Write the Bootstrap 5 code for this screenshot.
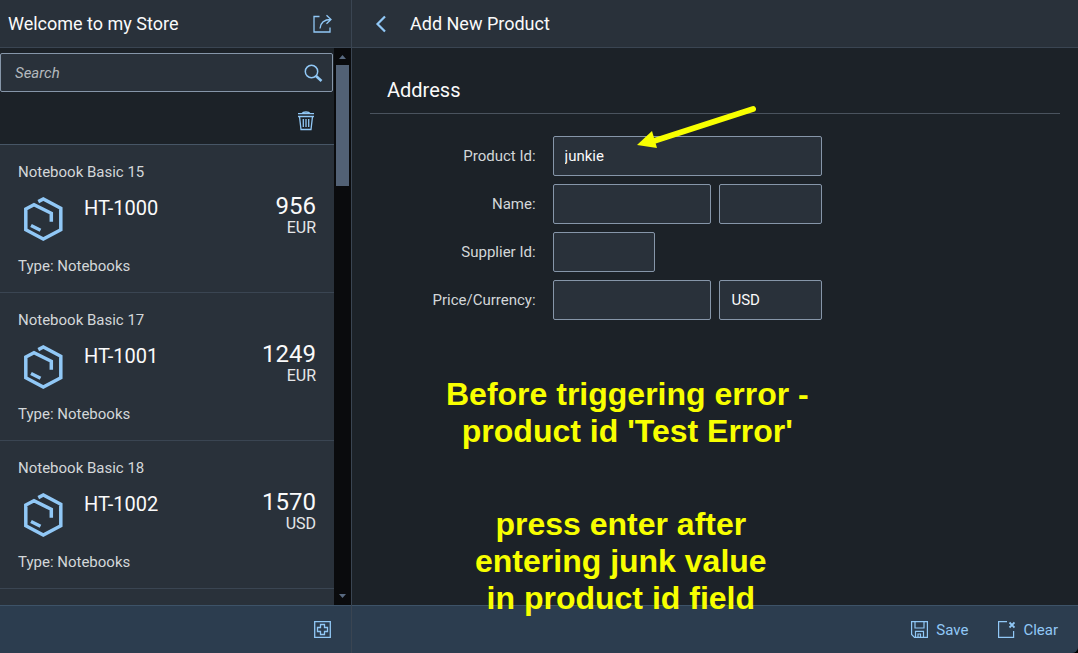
<!DOCTYPE html>
<html lang="en">
<head>
<meta charset="utf-8">
<meta name="viewport" content="width=device-width, initial-scale=1">
<title>Welcome to my Store</title>
<link href="https://cdn.jsdelivr.net/npm/bootstrap@5.3.0/dist/css/bootstrap.min.css" rel="stylesheet">
<style>
  :root { --base: #29313a; --page: #1c2228; --line: #3a4552; --accent: #91c8f6; --field: #8696a9; --label: #d3d7d9; --text: #fafafa; }
  body { font: 15px/20px Roboto, "Noto Sans", sans-serif; background: #000; color: var(--text); }
  svg { display: block; fill: none; stroke: currentColor; }
  .app { background: var(--page); border-bottom-right-radius: 6px; }
  .side { width: 352px; border-right: 1px solid var(--line); }
  .bar { height: 48px; background: var(--base); border-bottom: 1px solid var(--line); }
  .bar h1, .bar h2 { font-size: 18px; line-height: 24px; font-weight: 400; margin: 0; }
  .foot { height: 48px; background: #2c3d4f; border-top: 1px solid #3d5368; }
  .actions { gap: 30px; padding-right: 20px; }
  .act { border: 0; padding: 0; background: none; color: var(--accent); }
  .search { height: 39px; margin: 5px 1px 0 0; background: var(--base); border: 1px solid var(--field); border-radius: 2px; }
  .search input { background: none; border: 0; outline: 0; color: var(--text); padding: 0 14px; }
  .search input::placeholder { color: #b4b9be; font-style: italic; opacity: 1; }
  .tools { height: 53px; padding: 6px 19px 0 0; border-bottom: 1px solid #475666; }
  .product { padding: 17px 18px 16px; background: var(--base); border-bottom: 1px solid var(--line); color: var(--label); }
  .product-body { height: 50px; margin: 12px 0; color: var(--text); }
  .product-icon { color: var(--accent); stroke-width: 3.5; }
  .code { font-size: 20px; line-height: 28px; }
  .price { font-size: 24px; line-height: 24px; }
  .unit { font-size: 16px; line-height: 20px; color: #e4e6e8; }
  .scroller { width: 17px; background: #0a0b0d; color: #596a80; padding: 0 2px; }
  .scroller svg { fill: currentColor; stroke: none; }
  .thumb { height: 121px; background: #526175; }
  .content { padding: 28px 18px 0; }
  .content h3 { font-size: 20px; line-height: 28px; font-weight: 400; margin: 0 0 22px; padding: 0 17px 9px; border-bottom: 1px solid #4a535e; }
  .line { display: grid; grid-template-columns: 24% 39%; column-gap: 17px; margin-bottom: 8px; align-items: center; }
  .line label { text-align: right; color: var(--label); }
  .fields { display: grid; grid-template-columns: 1fr 38%; gap: 8px; }
  .fields.short { grid-template-columns: 38%; }
  .fields.full { grid-template-columns: 1fr; }
  .fields input { min-width: 0; height: 40px; padding: 0 11px; font-size: 15px; line-height: 20px; background: var(--base); border: 1px solid var(--field); border-radius: 2px; color: var(--text); }
  .note { position: absolute; margin: 0; font: bold 32px/37px "Liberation Sans", Arial, sans-serif; color: #f8ff00; text-align: center; white-space: nowrap; }
  .note-error { left: 94px; top: 376px; }
  .note-enter { left: 123px; top: 506px; }
  .arrow { position: absolute; left: 284px; top: 102px; }
</style>
</head>
<body>
<div class="app d-flex vh-100 overflow-hidden">
  <aside class="side d-flex flex-column flex-shrink-0">
    <header class="bar d-flex align-items-center justify-content-between flex-shrink-0 ps-2">
      <h1>Welcome to my Store</h1>
      <button class="act me-3" aria-label="Share"><svg width="24" height="22" viewBox="0 0 24 22" stroke-width="1.3"><path d="M8.500 3.500H3V19h16v-4.500M9 15.500c.500-6 3.500-9 11-9M15.500 2.200l4.500 4.300-4.500 4.300"/></svg></button>
    </header>
    <div class="d-flex flex-grow-1 overflow-hidden">
      <div class="flex-grow-1 overflow-hidden">
        <form class="search d-flex align-items-center" role="search">
          <input class="flex-grow-1" type="search" placeholder="Search" aria-label="Search">
          <button type="button" class="act pe-2" aria-label="Find"><svg width="22" height="22" viewBox="0 0 22 22"><circle cx="9.500" cy="9.500" r="6.200" stroke-width="1.500"/><path d="M14 14l5.500 5" stroke-width="2.600"/></svg></button>
        </form>
        <div class="tools d-flex align-items-center justify-content-end">
          <button class="act" aria-label="Delete"><svg width="18" height="20" viewBox="0 0 18 20" stroke-width="1.300"><path d="M1 2.600h16M5 2.500c1-2 7-2 8 0M1 5.500h16M2.500 5.500l1.500 13h10l1.500-13M6.300 8v8M9 8v8M11.700 8v8"/></svg></button>
        </div>
        <ul class="list-unstyled m-0">
          <li class="product">
            <div>Notebook Basic 15</div>
            <div class="product-body d-flex">
              <svg class="product-icon" width="50" height="50" viewBox="0 0 50 50"><path d="M20.300 7.600l5-2.600 17.500 9.300v21.500l-17.500 9.200L7.800 35.800V15l8.200-4.300 17.300 8.600v8.500M13 31.500l9.500 4.800"/></svg>
              <span class="code ms-3 flex-grow-1">HT-1000</span>
              <div class="text-end"><div class="price">956</div><div class="unit">EUR</div></div>
            </div>
            <div>Type: Notebooks</div>
          </li>
          <li class="product">
            <div>Notebook Basic 17</div>
            <div class="product-body d-flex">
              <svg class="product-icon" width="50" height="50" viewBox="0 0 50 50"><path d="M20.300 7.600l5-2.600 17.500 9.300v21.500l-17.500 9.200L7.800 35.800V15l8.200-4.300 17.300 8.600v8.500M13 31.500l9.500 4.800"/></svg>
              <span class="code ms-3 flex-grow-1">HT-1001</span>
              <div class="text-end"><div class="price">1249</div><div class="unit">EUR</div></div>
            </div>
            <div>Type: Notebooks</div>
          </li>
          <li class="product">
            <div>Notebook Basic 18</div>
            <div class="product-body d-flex">
              <svg class="product-icon" width="50" height="50" viewBox="0 0 50 50"><path d="M20.300 7.600l5-2.600 17.500 9.300v21.500l-17.500 9.200L7.800 35.800V15l8.200-4.300 17.300 8.600v8.500M13 31.500l9.500 4.800"/></svg>
              <span class="code ms-3 flex-grow-1">HT-1002</span>
              <div class="text-end"><div class="price">1570</div><div class="unit">USD</div></div>
            </div>
            <div>Type: Notebooks</div>
          </li>
          <li class="product"></li>
        </ul>
      </div>
      <div class="scroller d-flex flex-column flex-shrink-0" aria-hidden="true">
        <svg width="13" height="17" viewBox="0 0 13 17"><path d="M3 11l3.500-4 3.500 4z"/></svg>
        <div class="thumb"></div>
        <svg class="mt-auto" width="13" height="17" viewBox="0 0 13 17"><path d="M3 6l3.500 4L10 6z"/></svg>
      </div>
    </div>
    <footer class="foot d-flex align-items-center justify-content-end flex-shrink-0 pe-3">
      <button class="act me-1" aria-label="Add"><svg width="17" height="17" viewBox="0 0 17 17" stroke-width="1.300"><path d="M.7.700h15.600v15.600H.7zM6.500 3.500h4v3h3v4h-3v3h-4v-3h-3v-4h3z"/></svg></button>
    </footer>
  </aside>
  <main class="d-flex flex-column flex-grow-1 position-relative">
    <header class="bar d-flex align-items-center flex-shrink-0 ps-3">
      <button class="act ps-1" aria-label="Back"><svg width="18" height="18" viewBox="0 0 18 18" stroke-width="2.200"><path d="M13 1.500L5.500 9l7.500 7.500"/></svg></button>
      <h2 class="ms-3 ps-1">Add New Product</h2>
    </header>
    <form class="content flex-grow-1" id="product-form">
      <h3>Address</h3>
      <div class="line"><label for="pid">Product Id:</label><div class="fields full"><input id="pid" type="text" value="junkie"></div></div>
      <div class="line"><label for="pname">Name:</label><div class="fields"><input id="pname" type="text"><input type="text" aria-label="Name, second part"></div></div>
      <div class="line"><label for="supplier">Supplier Id:</label><div class="fields short"><input id="supplier" type="text"></div></div>
      <div class="line"><label for="price">Price/Currency:</label><div class="fields"><input id="price" type="text"><input type="text" value="USD" aria-label="Currency"></div></div>
    </form>
    <footer class="foot actions d-flex align-items-center justify-content-end flex-shrink-0">
      <button class="act d-flex align-items-center gap-2" form="product-form" type="button"><svg width="17" height="17" viewBox="0 0 17 17" stroke-width="1.200"><path d="M.6.600h15.800v15.800H3.500L.6 13.500zM4 .6v6.400h9V.6M4.500 16.400v-6h8v6M7 16v-3h2.500v3"/></svg>Save</button>
      <button class="act d-flex align-items-center gap-2" form="product-form" type="reset"><svg width="17" height="17" viewBox="0 0 17 17" stroke-width="1.200"><path d="M9 .6H.6v15.800h15V10"/><path d="M11.500 1.500l5 5m0-5l-5 5" stroke-width="1.800"/></svg>Clear</button>
    </footer>
    <svg class="arrow" width="124" height="50" viewBox="0 0 124 50" aria-hidden="true"><path d="M117 7L18 39" stroke="#f8ff00" stroke-width="6" stroke-linecap="round"/><path d="M1 43l15-14 5 17z" fill="#f8ff00" stroke="none"/></svg>
    <p class="note note-error">Before triggering error -<br>product id 'Test Error'</p>
    <p class="note note-enter">press enter after<br>entering junk value<br>in product id field</p>
  </main>
</div>
<script src="https://cdn.jsdelivr.net/npm/bootstrap@5.3.0/dist/js/bootstrap.bundle.min.js"></script>
</body>
</html>
